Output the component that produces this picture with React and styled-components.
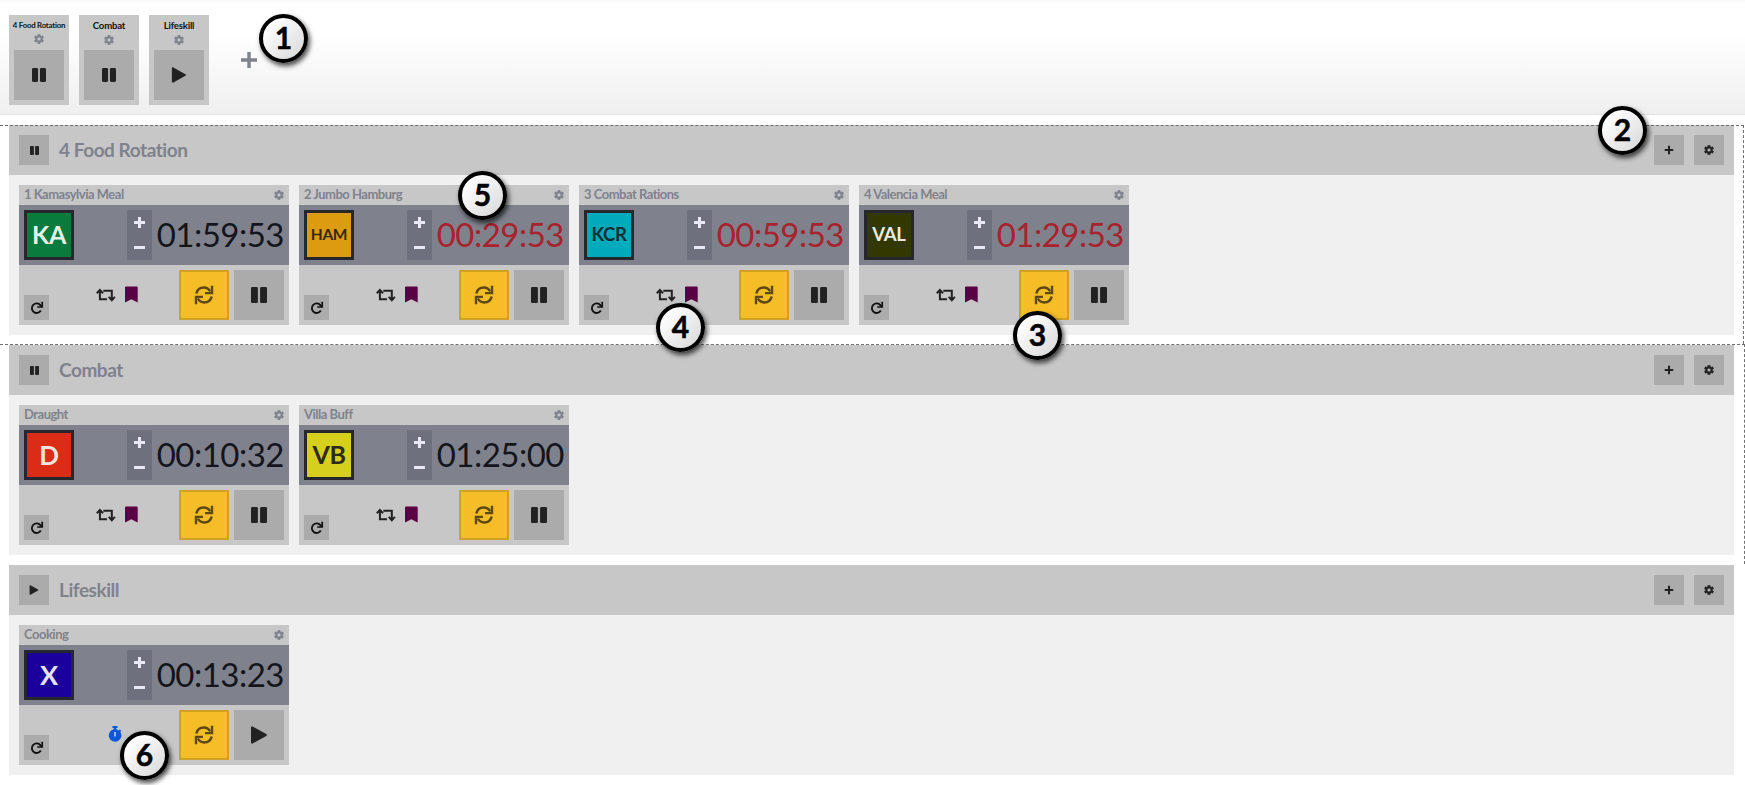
import React from 'react';
import styled, { createGlobalStyle } from 'styled-components';

const GlobalStyle = createGlobalStyle`
  * { box-sizing: border-box; }
  body { margin: 0; background: #fff; font-family: Lato, "Liberation Sans", sans-serif; overflow: hidden; }
  button { font: inherit; border: 0; padding: 0; margin: 0; }
  svg { display: block; }
`;

const Page = styled.div`
  position: relative;
  width: 1745px;
  height: 785px;
  overflow: hidden;
`;

const TopBar = styled.header`
  display: flex;
  gap: 10px;
  height: 115px;
  padding: 15px 9px 0;
  background: linear-gradient(#f9f9f9 0, #fff 4px, #fff 35px, #efefef 114px);
  border-bottom: 1px solid #e2e2e2;
`;

const GroupCard = styled.div`
  display: flex;
  flex-direction: column;
  align-items: center;
  justify-content: flex-end;
  width: 60px;
  height: 90px;
  padding-bottom: 5px;
  background: #c7c7c7;
  color: #7f828d;
`;

const GroupName = styled.div`
  font-size: ${(p) => (p.$small ? 7.8 : 9.6)}px;
  letter-spacing: -0.2px;
  font-weight: 700;
  line-height: 12px;
  height: 12px;
  margin-bottom: 3px;
  color: #111;
  white-space: nowrap;
`;

const GearSlot = styled.div`
  margin-bottom: ${(p) => (p.$small ? 6 : 5)}px;
`;

const Button = styled.button`
  display: flex;
  align-items: center;
  justify-content: center;
  flex: none;
  width: ${(p) => p.$size}px;
  height: ${(p) => p.$size}px;
  background: #ababab;
  color: #222;
`;

const RestartButton = styled(Button)`
  background: #f5be28;
  border: 2px solid #d0a125;
  color: #5c4811;
`;

const AddGroup = styled.div`
  margin: 37px 0 0 22px;
  height: 16px;
  color: #7f828d;
`;

const Groups = styled.main`
  display: flex;
  flex-direction: column;
  gap: 10px;
  padding-top: 10px;
`;

const Group = styled.section`
  position: relative;
  padding: 0 11px 0 9px;

  &::after {
    content: '';
    display: ${(p) => (p.$marked ? 'block' : 'none')};
    position: absolute;
    top: ${(p) => p.$lineTop}px;
    left: 0;
    right: ${(p) => p.$lineRight}px;
    bottom: -9px;
    border-top: 1px dashed #707070;
    border-right: 1px dashed #707070;
    pointer-events: none;
  }
`;

const GroupHeader = styled.div`
  display: flex;
  align-items: center;
  gap: 10px;
  height: 50px;
  padding: 0 10px;
  background: #c7c7c7;
`;

const GroupTitle = styled.h2`
  flex: 1;
  margin: 0;
  font-size: 19px;
  letter-spacing: -0.45px;
  line-height: 24px;
  font-weight: 700;
  color: #7f828d;
`;

const TimerList = styled.div`
  display: flex;
  gap: 10px;
  height: 160px;
  padding: 10px;
  background: #f0f0f0;
`;

const Timer = styled.article`
  width: 270px;
  height: 140px;
  background: #c7c7c7;
`;

const TimerHeader = styled.div`
  display: flex;
  align-items: center;
  justify-content: space-between;
  height: 20px;
  padding: 0 5px;
  color: #7f828d;
`;

const TimerName = styled.span`
  padding-bottom: 2px;
  font-size: 13px;
  letter-spacing: -0.5px;
  line-height: 18px;
  font-weight: 700;
`;

const Display = styled.div`
  display: flex;
  align-items: center;
  height: 60px;
  padding: 0 5px;
  background: #7f828d;
`;

const Badge = styled.div`
  display: flex;
  align-items: center;
  justify-content: center;
  width: 50px;
  height: 50px;
  padding-bottom: 1px;
  border: 3px solid #25272c;
  background: ${(p) => p.$bg};
  color: ${(p) => p.$fg};
  font-size: ${(p) => p.$fs}px;
  font-weight: 700;
  letter-spacing: -0.3px;
  line-height: 1;
`;

const Stepper = styled.div`
  display: flex;
  flex-direction: column;
  align-items: center;
  justify-content: space-between;
  width: 25px;
  height: 50px;
  margin-left: auto;
  padding: 7px 0;
  background: #6e707d;
  color: #e9e9f6;
`;

const Time = styled.div`
  width: 132px;
  padding-bottom: 2px;
  text-align: right;
  font-size: 33px;
  letter-spacing: -0.5px;
  line-height: 50px;
  color: ${(p) => (p.$alert ? '#a8232c' : '#14151c')};
`;

const Controls = styled.div`
  display: flex;
  align-items: flex-end;
  gap: 5px;
  height: 60px;
  padding: 5px;
`;

const Modes = styled.div`
  display: flex;
  flex: 1;
  align-items: center;
  justify-content: center;
  gap: ${(p) => (p.$single ? 0 : 9)}px;
  height: 50px;
  padding-left: ${(p) => (p.$single ? 2 : 5)}px;
  padding-bottom: 1px;
  color: #222;
`;

const Callout = styled.div`
  position: absolute;
  left: ${(p) => p.$x}px;
  top: ${(p) => p.$y}px;
  width: 49px;
  height: 49px;
  border: 4px solid #000;
  border-radius: 50%;
  background: linear-gradient(135deg, #fff 15%, #dcdcdc 90%);
  box-shadow: 2px 3px 5px rgba(0, 0, 0, 0.7);
  color: #000;
  font-size: 30px;
  font-weight: 700;
  line-height: 38px;
  text-align: center;
  -webkit-text-stroke: 0.5px #000;
`;

const Gear = ({ size = 11 }) => (
  <svg width={size} height={size} viewBox="2 2 20 20" fill="currentColor" stroke="currentColor" strokeWidth="0.7">
    <path d="M19.14 12.94c.04-.3.06-.61.06-.94 0-.32-.02-.64-.07-.94l2.03-1.58a.49.49 0 0 0 .12-.61l-1.92-3.32a.488.488 0 0 0-.59-.22l-2.39.96c-.5-.38-1.03-.7-1.62-.94l-.36-2.54a.484.484 0 0 0-.48-.41h-3.84c-.24 0-.43.17-.47.41l-.36 2.54c-.59.24-1.13.57-1.62.94l-2.39-.96c-.22-.08-.47 0-.59.22L2.74 8.87c-.12.21-.08.47.12.61l2.03 1.58c-.05.3-.09.63-.09.94s.02.64.07.94l-2.03 1.58a.49.49 0 0 0-.12.61l1.92 3.32c.12.22.37.29.59.22l2.39-.96c.5.38 1.03.7 1.62.94l.36 2.54c.05.24.24.41.48.41h3.84c.24 0 .44-.17.47-.41l.36-2.54c.59-.24 1.13-.56 1.62-.94l2.39.96c.22.08.47 0 .59-.22l1.92-3.32c.12-.22.07-.47-.12-.61l-2.01-1.58zM12 15.6A3.6 3.6 0 1 1 12 8.4a3.6 3.6 0 0 1 0 7.2z" />
  </svg>
);

const Pause = ({ size = 16 }) => (
  <svg width={size} height={size} viewBox="0 0 16 16" fill="currentColor">
    <rect x="0" y="0" width="6.900" height="16" rx="1.300" />
    <rect x="9.100" y="0" width="6.900" height="16" rx="1.300" />
  </svg>
);

const Play = ({ size = 18 }) => (
  <svg width={size} height={size} viewBox="0 0 18 18" fill="currentColor">
    <path d="M1 1.600C1 .6 1.800.1 2.700.6l13.500 7.500c.9.5.9 1.300 0 1.800L2.700 17.400C1.800 17.900 1 17.400 1 16.400z" />
  </svg>
);

const Plus = ({ size, weight, inset = 0 }) => (
  <svg width={size} height={size} viewBox={`0 0 ${size} ${size}`} stroke="currentColor" strokeWidth={weight}>
    <path d={`M${inset} ${size / 2}H${size - inset}M${size / 2} ${inset}V${size - inset}`} />
  </svg>
);

const Minus = () => (
  <svg width="11" height="11" viewBox="0 0 11 11" fill="currentColor">
    <rect y="4" width="11" height="3" rx="0.5" />
  </svg>
);

const Restart = () => (
  <svg width="20" height="20" viewBox="0 0 20 20" fill="none" stroke="currentColor" strokeWidth="2.500">
    <path d="M2.300 8.500C3.200 4.900 6.200 2.500 9.700 2.500c2.800 0 5 1.400 6.500 3.800M17.700 11.500c-.9 3.600-3.900 6-7.400 6-2.800 0-5-1.400-6.500-3.800" />
    <path d="M18 .8v7.300H11M2 19.200v-7.300H9" strokeWidth="2.400" />
  </svg>
);

const Reset = () => (
  <svg width="14" height="14" viewBox="0 0 14 14" fill="none" stroke="#111" strokeWidth="1.900">
    <path d="M10.800 9.600A4.800 4.800 0 1 1 10.400 4.100L11.800 5.500" />
    <path d="M12.200 .8v5.200H7.200" strokeWidth="1.700" />
  </svg>
);

const Repeat = () => (
  <svg width="20" height="14" viewBox="0 0 20 14" fill="none" stroke="currentColor" strokeWidth="2">
    <path d="M3.900 2V11.300H11M.8 5.200 3.900 1.900 7 5.200M7.300 2.700H15.800V12M12.700 8.900 15.800 12.200 18.900 8.900" />
  </svg>
);

const Bookmark = () => (
  <svg width="13" height="17" viewBox="0 0 13 17" fill="#5a0045">
    <path d="M0 1.500Q0 .5 1 .5h10.700q1 0 1 1V16.500L6.350 13.200 0 16.500z" />
  </svg>
);

const Stopwatch = () => (
  <svg width="14" height="17" viewBox="0 0 14 17">
    <path fill="#0b57d8" d="M4.500 0h5v2h-1.300v1.300a6.400 6.400 0 0 1 2.600 1.100l1-1 1.500 1.400-1 1.100a6.300 6.300 0 1 1-6.500-2.600V2H4.500z" />
    <path stroke="#c7d3ea" strokeWidth="1.500" d="M7 6v4.500" />
  </svg>
);

const groups = [
  {
    name: '4 Food Rotation', small: true, running: true, marked: true, lineTop: 0, lineRight: 1,
    timers: [
      { name: '1 Kamasylvia Meal', code: 'KA', fs: 25, bg: '#087b3d', fg: '#e4f1e8', time: '01:59:53' },
      { name: '2 Jumbo Hamburg', code: 'HAM', fs: 15.5, bg: '#dc9b10', fg: '#332813', time: '00:29:53', alert: true },
      { name: '3 Combat Rations', code: 'KCR', fs: 18.5, bg: '#00aabd', fg: '#0f2e35', time: '00:59:53', alert: true },
      { name: '4 Valencia Meal', code: 'VAL', fs: 18.5, bg: '#333800', fg: '#e9eadf', time: '01:29:53', alert: true },
    ],
  },
  {
    name: 'Combat', running: true, marked: true, lineTop: -1, lineRight: 0,
    timers: [
      { name: 'Draught', code: 'D', fs: 26, bg: '#db2d16', fg: '#f3e4e0', time: '00:10:32' },
      { name: 'Villa Buff', code: 'VB', fs: 25, bg: '#d6cf1e', fg: '#2d2b15', time: '01:25:00' },
    ],
  },
  {
    name: 'Lifeskill', running: false,
    timers: [{ name: 'Cooking', code: 'X', fs: 27, bg: '#1c009c', fg: '#e4e2f4', time: '00:13:23', stopwatch: true }],
  },
];

const callouts = [
  [259, 14], [1598, 106], [1013, 311], [656, 303], [458, 171], [120, 731],
];

const TimerCard = ({ timer, running }) => (
  <Timer>
    <TimerHeader>
      <TimerName>{timer.name}</TimerName>
      <Gear size={10} />
    </TimerHeader>
    <Display>
      <Badge $bg={timer.bg} $fg={timer.fg} $fs={timer.fs}>{timer.code}</Badge>
      <Stepper>
        <Plus size={11} weight={3} />
        <Minus />
      </Stepper>
      <Time $alert={timer.alert}>{timer.time}</Time>
    </Display>
    <Controls>
      <Button $size={25}><Reset /></Button>
      <Modes $single={timer.stopwatch}>
        {timer.stopwatch ? <Stopwatch /> : <><Repeat /><Bookmark /></>}
      </Modes>
      <RestartButton $size={50}><Restart /></RestartButton>
      <Button $size={50}>{running ? <Pause size={16} /> : <Play size={18} />}</Button>
    </Controls>
  </Timer>
);

export default function App() {
  return (
    <>
      <GlobalStyle />
      <Page>
        <TopBar>
          {groups.map((g) => (
            <GroupCard key={g.name}>
              <GroupName $small={g.small}>{g.name}</GroupName>
              <GearSlot $small={g.small}><Gear size={10} /></GearSlot>
              <Button $size={50}>{g.running ? <Pause size={14} /> : <Play size={16} />}</Button>
            </GroupCard>
          ))}
          <AddGroup><Plus size={16} weight={3.4} /></AddGroup>
        </TopBar>
        <Groups>
          {groups.map((g) => (
            <Group key={g.name} $marked={g.marked} $lineTop={g.lineTop} $lineRight={g.lineRight}>
              <GroupHeader>
                <Button $size={30}>{g.running ? <Pause size={9} /> : <Play size={10} />}</Button>
                <GroupTitle>{g.name}</GroupTitle>
                <Button $size={30}><Plus size={10} weight={2} inset={0.7} /></Button>
                <Button $size={30}><Gear size={10} /></Button>
              </GroupHeader>
              <TimerList>
                {g.timers.map((t) => <TimerCard key={t.name} timer={t} running={g.running} />)}
              </TimerList>
            </Group>
          ))}
        </Groups>
        {callouts.map(([x, y], i) => <Callout key={i} $x={x} $y={y}>{i + 1}</Callout>)}
      </Page>
    </>
  );
}
